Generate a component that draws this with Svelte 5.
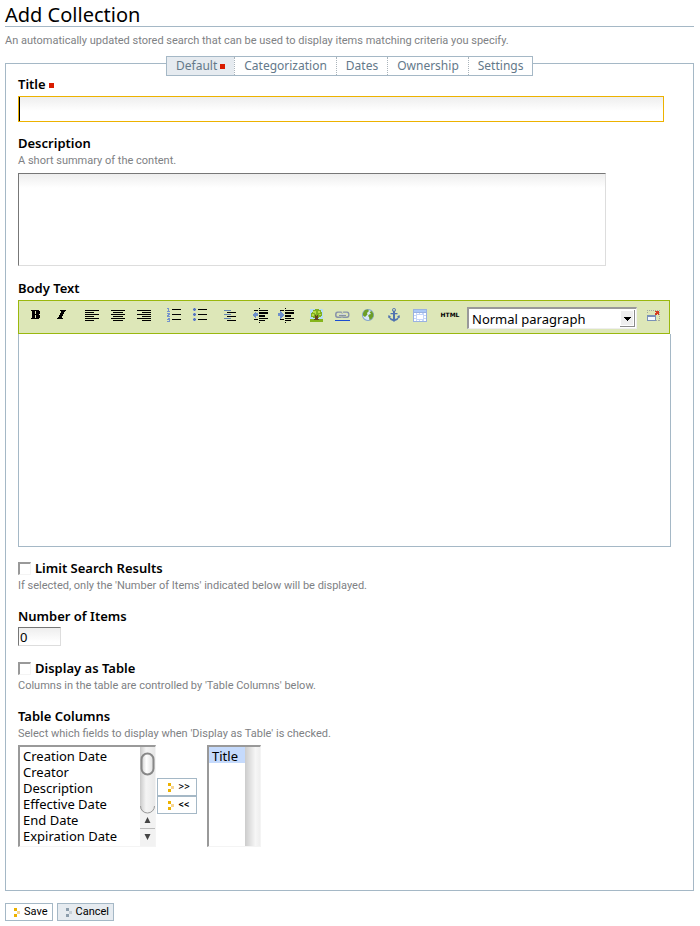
<script>
  let titleText = $state('');
  let description = $state('');
  let body = $state('');
  let limit = $state(false);
  let asTable = $state(false);
  let count = $state('0');
  let format = $state('Normal paragraph');
  let picked = $state(['Title']);
  const tabs = ['Default', 'Categorization', 'Dates', 'Ownership', 'Settings'];
  const columns = ['Creation Date', 'Creator', 'Description', 'Effective Date', 'End Date', 'Expiration Date'];

  // Each icon is a list of [path, fill] layers on a 16 by 16 grid.
  const groups = [
    [
      { name: 'Bold', layers: [['M3 3h8v1h1v3h-1v1h1v3h-1v1H3v-1h1V4H3zM7 4v3h1V4zM7 8v3h1V8z', '#000']] },
      { name: 'Italic', layers: [['M6 3h6v1h-1v1h-1v2H9v2H8v2h1v1H3v-1h1v-1h1V8h1V6h1V4H6z', '#000']] }
    ],
    [
      { name: 'Align left', layers: [['M1 3h14v1H1zM1 5h9v1H1zM1 7h14v1H1zM1 9h9v1H1zM1 11h14v1H1zM1 13h9v1H1z', '#000']] },
      { name: 'Align center', layers: [['M1 3h14v1H1zM3 5h10v1H3zM1 7h14v1H1zM3 9h10v1H3zM1 11h14v1H1zM3 13h10v1H3z', '#000']] },
      { name: 'Align right', layers: [['M1 3h14v1H1zM6 5h9v1H6zM1 7h14v1H1zM6 9h9v1H6zM1 11h14v1H1zM6 13h9v1H6z', '#000']] }
    ],
    [
      { name: 'Numbered list', layers: [
        ['M6 2h9v1H6zM6 7h9v1H6zM6 12h9v1H6z', '#000'],
        ['M1 1h2v3h1v1H1V4h1V2H1zM1 6h3v2H3v1h1v1H1V8h1V7H1zM1 11h3v4H1v-1h2v-1H1v-1h2z', '#7592cc']] },
      { name: 'Bulleted list', layers: [
        ['M6 2h9v1H6zM6 7h9v1H6zM6 12h9v1H6z', '#000'],
        ['M1 2h1V1h1v1h1v1H3v1H2V3H1zM1 7h1V6h1v1h1v1H3v1H2V8H1zM1 12h1v-1h1v1h1v1H3v1H2v-1H1z', '#5676b8'],
        ['M1 1h1v1H1zM3 1h1v1H3zM1 3h1v1H1zM3 3h1v1H3zM1 6h1v1H1zM3 6h1v1H3zM1 8h1v1H1zM3 8h1v1H3zM1 11h1v1H1zM3 11h1v1H3zM1 13h1v1H1zM3 13h1v1H3z', '#9db2d6']] }
    ],
    [
      { name: 'Definition list', layers: [
        ['M5 5h9v1H5zM5 9h9v1H5zM5 13h9v1H5z', '#000'],
        ['M2 3h7v1H2zM2 7h7v1H2zM2 11h7v1H2z', '#6485b0']] }
    ],
    [
      { name: 'Outdent', layers: [
        ['M2 3h4v1H2zM7 1h1v1H7zM7 3h9v1H7zM7 5h9v2H7zM7 8h6v2H7zM7 11h9v1H7zM7 13h6v1H7zM2 12h4v1H2zM7 15h1v1H7z', '#000'],
        ['M0 8l4-4v2h2v3H4v3z', '#6d8fca']] },
      { name: 'Indent', layers: [
        ['M2 3h4v1H2zM7 1h1v1H7zM7 3h9v1H7zM7 5h9v2H7zM7 8h6v2H7zM7 11h9v1H7zM7 13h6v1H7zM2 12h4v1H2zM7 15h1v1H7z', '#000'],
        ['M6 8L2 4v2H0v3h2v3z', '#6d8fca']] }
    ],
    [
      { name: 'Insert image', layers: [
        ['M2 2h13v12H2z', '#b5dcf5'],
        ['M2 12h13v3H2z', '#86b51c'],
        ['M4 5h1V3h2V2h4v1h2v2h1v4h-1v1h-2v1H5v-1H3V6h1z', '#7fb020'],
        ['M5 4h3v2H5zM10 4h2v2h-2zM4 7h2v2H4zM11 7h2v1h-2zM7 6h1v1H7z', '#b9da48'],
        ['M7 8h1v1h1V8h1v4h1v1H6v-1h1z', '#65451e']] },
      { name: 'Link', smooth: true, layers: [
        ['M3.500 4.500h3.500q2 0 2.500 1.500h-1l-1-.2H4q-1.500 0-1.500 2T4 9.500h3l2-1q-.5 2.500-2.500 2.500H3.500Q1 11 1 7.800T3.500 4.500zM9.500 4.500h3.500q2.500 0 2.500 3.200T13 11H9.500Q7.500 11 7 9h1l1.500.5H13q1.200 0 1.200-1.700T13 5.800H9.500L7.500 7q.2-2.500 2-2.500z', '#8793aa'],
        ['M5 7h7v1.700H5z', '#64738d'],
        ['M5 7h7v.7H5z', '#fff'],
        ['M1 13h15v1H1z', '#1c4ed0']] },
      { name: 'Internal link', smooth: true, layers: [
        ['M8 2a6 6 0 1 0 .01 0z', '#84a4cc'],
        ['M8 3a5 5 0 1 0 .01 0z', '#d8e7fa'],
        ['M3 6l2-3 3-.5 1 1.500-2 2 .5 1.500L5 10 3 8.500zM9.500 5l2-1 1.800 2.500v3l-1.800 2.500-2 1-.5-3-1-1 1-1.500 2-.5z', '#6d9e27']] },
      { name: 'Anchor', smooth: true, layers: [
        ['M8 1a2 2 0 0 1 1 3.700V6h2.500v1.300H9V12q2.500-.5 3-2l-1-.5L13.500 8 14 11l-1-.5Q12 13.500 9 14l-1 1-1-1q-3-.5-4-3.500L2 11l.5-3L5 9.500 4 10q.5 1.500 3 2V7.300H4.500V6H7V4.700A2 2 0 0 1 8 1zM8 2a.9.9 0 1 0 .01 0z', '#4f72b0']] },
      { name: 'Insert table', layers: [
        ['M1 2h14v13H1z', '#9ab2e0'],
        ['M2 3h12v2H2z', '#aac8f5'],
        ['M2 6h12v8H2z', '#c4d6f8'],
        ['M2 6h2v2H2zM2 9h2v2H2zM2 12h2v2H2zM5 6h2v1H5zM8 6h2v1H8zM5 8h6v4H5zM5 13h2v1H5zM8 13h2v1H8zM12 6h2v2h-2zM12 9h2v2h-2zM12 12h2v2h-2z', '#fff']] }
    ]
  ];
</script>

<svelte:head><title>Add Collection</title></svelte:head>

{#snippet mark(a, b)}
  <svg class="mark" width="6" height="9" viewBox="0 0 6 9" aria-hidden="true">
    <path d="M0 0h3v3H0zM0 6h3v3H0z" fill={a} /><path d="M3 3h3v3H3z" fill={b} />
  </svg>
{/snippet}

<main>
  <h1>Add Collection</h1>
  <p class="lead help">An automatically updated stored search that can be used to display items matching criteria you specify.</p>

  <form onsubmit={(e) => e.preventDefault()}>
    <section class="panel">
      <nav>
        {#each tabs as tab, i}
          <a href={'#' + tab.toLowerCase()} class:active={i === 0}>{tab}{#if i === 0}<i class="req"></i>{/if}</a>
        {/each}
      </nav>

      <label class="name" for="title">Title <i class="req"></i></label>
      <input id="title" class="title" type="text" bind:value={titleText} />

      <label class="name" for="description">Description</label>
      <p class="help">A short summary of the content.</p>
      <textarea id="description" class="description" bind:value={description}></textarea>

      <label class="name" for="body">Body Text</label>
      <div class="toolbar">
        {#each groups as group}
          <div class="group">
            {#each group as icon}
              <button type="button" class="tool" aria-label={icon.name}>
                <svg width="16" height="16" viewBox="0 0 16 16" overflow="visible" shape-rendering={icon.smooth ? 'auto' : 'crispEdges'}>
                  {#each icon.layers as [d, fill]}<path {d} {fill} fill-rule="evenodd" />{/each}
                </svg>
              </button>
            {/each}
          </div>
        {/each}
        <button type="button" class="tool html">HTML</button>
        <div class="format">
          <select aria-label="Paragraph style" bind:value={format}><option>Normal paragraph</option></select>
          <svg class="drop" width="15" height="17" viewBox="0 0 15 17" shape-rendering="crispEdges" aria-hidden="true">
            <path d="M0 0h15v17H0z" fill="#8b8b8b" /><path d="M0 0h14v16H0z" fill="#fff" /><path d="M1 1h12v14H1z" fill="#eee" />
            <path d="M4 7h7v1H4zM5 8h5v1H5zM6 9h3v1H6zM7 10h1v1H7z" />
          </svg>
        </div>
        <button type="button" class="tool" aria-label="Full screen">
          <svg width="16" height="16" viewBox="0 0 16 16" shape-rendering="crispEdges">
            <path d="M1 3.500h13M13.500 3v11M1.500 3v4M10 13.500h3" stroke="#a3aaa0" stroke-dasharray="1 1" fill="none" />
            <path d="M1 8h9v6H1z" fill="#7991b8" /><path d="M2 10h7v3H2z" fill="#f5f8ff" />
            <path d="M9 4h4v4h-1V7h-1v1H9V6h1V5H9z" fill="#d43a22" />
          </svg>
        </button>
      </div>
      <textarea id="body" class="body" bind:value={body}></textarea>

      <div class="check"><input id="limit" type="checkbox" bind:checked={limit} /><label class="name" for="limit">Limit Search Results</label></div>
      <p class="help">If selected, only the 'Number of Items' indicated below will be displayed.</p>

      <label class="name spaced" for="count">Number of Items</label>
      <input id="count" class="count" type="text" bind:value={count} />

      <div class="check"><input id="table" type="checkbox" bind:checked={asTable} /><label class="name" for="table">Display as Table</label></div>
      <p class="help">Columns in the table are controlled by 'Table Columns' below.</p>

      <label class="name spaced" for="columns">Table Columns</label>
      <p class="help">Select which fields to display when 'Display as Table' is checked.</p>
      <div class="picker">
        <div class="list available">
          <select id="columns" multiple size="6">
            {#each columns as c}<option>{c}</option>{/each}
          </select>
          <svg width="15" height="99" viewBox="0 0 15 99" aria-hidden="true">
            <defs>
              <linearGradient id="track"><stop offset="0" stop-color="#c9c9c9" /><stop offset=".4" stop-color="#f4f4f4" /><stop offset="1" stop-color="#e8e8e8" /></linearGradient>
              <linearGradient id="thumb"><stop offset="0" stop-color="#ccc" /><stop offset=".4" stop-color="#fff" /><stop offset="1" stop-color="#ddd" /></linearGradient>
            </defs>
            <path d="M0 0h15v99H0z" fill="#f2f2f2" />
            <path d="M0 0h15v59a7.500 7.500 0 0 1-15 0z" fill="url(#track)" />
            <path d="M0.500 59a7 7 0 0 0 14 0" fill="none" stroke="#999" />
            <rect x="1.500" y="6.500" width="12" height="21" rx="6" fill="url(#thumb)" stroke="#888" stroke-width="2" />
            <path d="M0 81.500h15" stroke="#bbb" />
            <path d="M4.500 76l3-6 3 6zM4.500 87l3 6 3-6z" fill="#444" />
          </svg>
        </div>
        <div class="moves">
          <button type="button">{@render mark('#edb200', '#f7d591')}&gt;&gt;</button>
          <button type="button">{@render mark('#edb200', '#f7d591')}&lt;&lt;</button>
        </div>
        <div class="list chosen">
          <select aria-label="Selected columns" multiple size="6" bind:value={picked}><option>Title</option></select>
          <div class="idle"></div>
        </div>
      </div>
    </section>

    <div class="actions">
      <button type="submit">{@render mark('#edb200', '#f7d591')}Save</button>
      <button type="button" class="cancel">{@render mark('#8c9dac', '#c5ced6')}Cancel</button>
    </div>
  </form>
</main>

<style>
  :global(body) { margin: 0; background: #fff; }
  main { padding: 4px 6px 5px 5px; font: 13px/16px "Noto Sans", "Open Sans", sans-serif; color: #000; }
  main * { box-sizing: border-box; }
  h1 { margin: 0; font-size: 20px; line-height: 22px; font-weight: 400; border-bottom: 1px solid #a5b8c6; }
  p { margin: 0; }
  .help { font-family: Roboto, "Noto Sans", sans-serif; font-size: 11px; line-height: 16px; color: #7e8184; margin-top: 2px; }
  .lead { margin-top: 6px; }
  input, textarea, select, button { font: inherit; color: inherit; margin: 0; border-radius: 0; outline: 0; }

  .panel { margin-top: 14px; border: 1px solid #a5b8c6; padding: 0 22px 43px 12px; }
  nav { display: flex; width: max-content; height: 20px; margin: -8px 0 0 148px; border: 1px solid #a5b8c6; background: #fff; font-size: 12px; }
  nav a { display: flex; align-items: center; padding: 0 9px; line-height: 18px; color: #64798a; text-decoration: none; }
  nav a + a { border-left: 1px dotted #aab4bb; }
  nav a.active { background: #e6ebf0; }
  .req { display: inline-block; width: 5px; height: 5px; margin-left: 3px; background: #d91c00; }
  .name .req { margin: 0 0 1px; }
  .name { display: block; font-weight: 600; }

  .title, .description, .count { display: block; background: linear-gradient(#eee, #fff 14px); border: 1px solid; border-color: #777 #ddd #ddd #777; }
  .title { width: 99%; height: 26px; margin: 4px 0 13px; padding: 0 3px; border-color: #edb200; background: linear-gradient(#000, #000) 0 0 / 1px 100% no-repeat, linear-gradient(#eee, #fff 14px); }
  .description { width: 90%; height: 93px; margin: 4px 0 14px; resize: none; }
  .count { width: 43px; height: 19px; margin: 3px 0 14px; padding: 0 1px; }
  .toolbar { display: flex; height: 34px; margin: 4px 1px 0 0; padding: 0 3px 0 4px; gap: 4px; border: 1px solid #9ab80e; background: #dde7b8; }
  .group { display: flex; }
  .tool { display: flex; flex: none; justify-content: center; align-items: center; width: 26px; height: 28px; padding: 0; border: 0; background: none; }
  .html { font: 700 6px/16px "DejaVu Sans", sans-serif; }
  .format { display: flex; flex: none; align-items: center; width: 170px; height: 22px; margin-top: 6px; padding-right: 1px; border: solid #999; border-width: 2px 1px 1px 2px; border-color: #999 #eee #eee #999; background: #fff; }
  .format select { flex: 1; min-width: 0; padding: 0 0 0 3px; border: 0; appearance: none; background: none; line-height: 18px; }
  .body { display: block; width: 100%; height: 213px; margin-bottom: 13px; border: 1px solid #a5b8c6; border-top: 0; resize: none; }
  .check { display: flex; align-items: center; gap: 4px; }
  .check input { appearance: none; width: 13px; height: 13px; border: solid; border-width: 2px 1px 1px 2px; border-color: #999 #f4f4f4 #f4f4f4 #999; background: #fff; }
  .spaced { margin-top: 14px; }

  .picker { display: flex; align-items: center; margin-top: 3px; }
  .list { display: flex; height: 102px; border: solid; border-width: 2px 1px 1px 2px; border-color: #999 #f4f4f4 #f4f4f4 #999; }
  .list select { height: 99px; padding: 0; border: 0; overflow: hidden; background: #fff; }
  .list option { min-height: 0; height: 16px; padding: 0 3px; line-height: 16px; }
  .available { width: 138px; }
  .available select { flex: 1; min-width: 0; }
  .available svg { flex: none; }
  .chosen { width: 54px; margin-left: 10px; }
  .chosen select { width: 36px; flex: none; }
  .chosen option:checked { background: #c5dafc linear-gradient(#c5dafc, #c5dafc); color: #000; }
  .idle { flex: 1; background: linear-gradient(90deg, #ccc, #f6f6f6 70%, #eee); }
  .moves { display: flex; flex-direction: column; margin-left: 1px; }
  .moves button, .actions button { display: flex; align-items: center; gap: 4px; padding: 0 4px 0 8px; border: 1px solid #a5b8c6; background: #fff; font: 11px/16px Roboto, "Noto Sans", sans-serif; }
  .moves button { width: 40px; height: 18px; justify-content: center; }
  .mark { flex: none; }
  .actions { display: flex; gap: 4px; margin-top: 12px; }
  .actions button { height: 18px; }
  .actions .cancel { background: #e6ebf0; }
</style>
